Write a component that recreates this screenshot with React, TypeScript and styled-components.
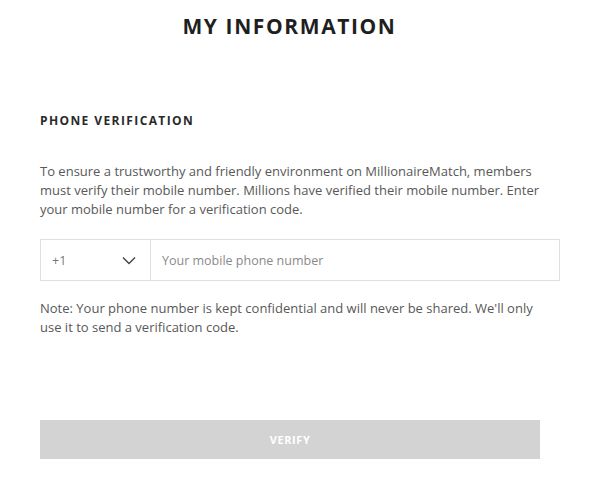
import React from "react";
import styled, { createGlobalStyle } from "styled-components";

const Global = createGlobalStyle`
  html, body { margin: 0; padding: 0; background: #fff; }
  body { font-family: "Open Sans", "Noto Sans", sans-serif; }
  * { box-sizing: border-box; }
`;

const Page = styled.div`
  width: 595px;
  height: 478px;
  padding: 11px 35px 0 40px;
  display: flex;
  flex-direction: column;
`;

const Title = styled.h1`
  margin: 0;
  text-align: center;
  font-size: 21px;
  font-weight: 700;
  letter-spacing: 1.6px;
  color: #1f1f1f;
  line-height: 30px;
  padding-right: 21px;
`;

const SectionTitle = styled.h2`
  margin: 72px 0 0;
  font-size: 12px;
  font-weight: 700;
  letter-spacing: 1.4px;
  color: #2a2a2a;
  line-height: 16px;
`;

const Paragraph = styled.p<{ $top: number }>`
  margin: ${(p) => p.$top}px 0 0;
  font-size: 13px;
  line-height: 19px;
  color: #585858;
  width: 530px;
  white-space: nowrap;
`;

const PhoneRow = styled.div`
  margin-top: 20px;
  width: 520px;
  height: 42px;
  display: flex;
  border: 1px solid #e0e0e0;
`;

const CodeSelect = styled.div`
  width: 110px;
  flex: none;
  display: flex;
  align-items: center;
  justify-content: space-between;
  padding: 0 14px 0 11px;
  border-right: 1px solid #e0e0e0;
  font-size: 12.5px;
  color: #777;
`;

const PhoneInput = styled.input`
  flex: 1;
  border: none;
  outline: none;
  padding: 0 11px;
  font-family: inherit;
  font-size: 12.5px;
  color: #333;
  &::placeholder { color: #8a8a8a; }
`;

const VerifyButton = styled.button`
  margin-top: 83px;
  width: 500px;
  height: 39px;
  border: none;
  background: #d3d3d3;
  color: #fff;
  font-family: inherit;
  font-size: 11px;
  font-weight: 700;
  letter-spacing: 0.6px;
`;

export default function App() {
  return (
    <>
      <Global />
      <Page>
        <Title>MY INFORMATION</Title>
        <SectionTitle>PHONE VERIFICATION</SectionTitle>
        <Paragraph $top={33}>
          To ensure a trustworthy and friendly environment on MillionaireMatch, members
          <br />
          must verify their mobile number. Millions have verified their mobile number. Enter
          <br />
          your mobile number for a verification code.
        </Paragraph>
        <PhoneRow>
          <CodeSelect>
            <span>+1</span>
            <svg width="14" height="9" viewBox="0 0 14 9" fill="none">
              <path d="M1 1.5 L7 7.5 L13 1.5" stroke="#444" strokeWidth="1.4" />
            </svg>
          </CodeSelect>
          <PhoneInput placeholder="Your mobile phone number" />
        </PhoneRow>
        <Paragraph $top={18}>
          Note: Your phone number is kept confidential and will never be shared. We'll only
          <br />
          use it to send a verification code.
        </Paragraph>
        <VerifyButton>VERIFY</VerifyButton>
      </Page>
    </>
  );
}
